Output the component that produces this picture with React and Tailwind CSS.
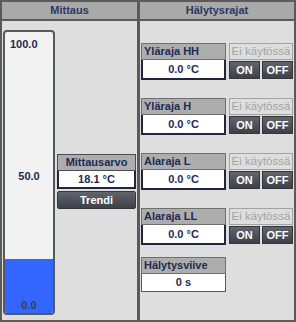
import { Fragment } from 'react'

const font = { fontFamily: '"Liberation Sans", Arial, sans-serif' }

const limits = [
  { label: 'Yläraja HH', value: '0.0 °C' },
  { label: 'Yläraja H', value: '0.0 °C' },
  { label: 'Alaraja L', value: '0.0 °C' },
  { label: 'Alaraja LL', value: '0.0 °C' },
]

const DarkButton = ({ children, className = '' }) => (
  <div
    className={`flex items-center justify-center border border-[#34363b] bg-gradient-to-b from-[#62656d] to-[#3d4047] text-[11px] font-bold text-white ${className}`}
  >
    {children}
  </div>
)

const LimitRow = ({ label, value }) => (
  <div className="flex gap-[3px]">
    <div className="flex w-[85px] flex-col">
      <div className="flex h-[17px] items-center border border-[#6f6f6f] bg-[#adadad] pl-[2px] text-[11px] font-bold text-[#1d2b55]">
        {label}
      </div>
      <div className="flex h-[20px] items-center justify-center border-x-2 border-b-2 border-[#22263a] bg-white text-[11px] font-bold text-[#1d2b55]">
        {value}
      </div>
    </div>
    <div className="flex w-[64px] flex-col gap-[1px]">
      <div className="flex h-[17px] items-center justify-center border border-[#a3a3a3] bg-[#dedede] text-[11.5px] text-[#a3a3a3]">
        Ei käytössä
      </div>
      <div className="flex gap-[2px]">
        <DarkButton className="h-[18px] w-[31px]">ON</DarkButton>
        <DarkButton className="h-[18px] w-[31px]">OFF</DarkButton>
      </div>
    </div>
  </div>
)

export default function App() {
  return (
    <div style={font} className="flex h-[322px] w-[296px] flex-col border-2 border-[#5a5a5a] bg-[#dedede]">
      {/* header */}
      <div className="flex h-[19px] border-b-2 border-[#5a5a5a] bg-[#a9a9a9] text-[11px] font-bold text-[#2a3866]">
        <div className="flex w-[135px] items-center justify-center">Mittaus</div>
        <div className="w-[3px] bg-[#5a5a5a]" />
        <div className="flex flex-1 items-center justify-center">Hälytysrajat</div>
      </div>

      <div className="flex flex-1">
        {/* Mittaus */}
        <div className="flex w-[135px] items-start gap-[2px] pl-[1px] pt-[9px]">
          <div className="relative flex h-[285px] w-[52px] flex-col overflow-hidden rounded-[4px] border-2 border-[#555a62] bg-[#f2f2f2]">
            <div className="flex-1" />
            <div className="h-[54px] bg-[#3366ff]" />
            <span className="absolute left-[5px] top-[4px] text-[11px] font-bold text-[#1d2b55]">100.0</span>
            <span className="absolute left-0 right-0 top-[136px] text-center text-[11px] font-bold text-[#1d2b55]">50.0</span>
            <span className="absolute bottom-[0px] left-0 right-0 text-center text-[11px] font-bold text-[#3a3f4a]">0.0</span>
          </div>
          <div className="mt-[124px] flex w-[79px] flex-col">
            <div className="flex h-[17px] items-center justify-center border border-[#4a4d55] bg-[#adadad] text-[11px] font-bold text-[#1d2b55]">
              Mittausarvo
            </div>
            <div className="flex h-[18px] items-center justify-center border-x-2 border-b-2 border-[#22263a] bg-white text-[11px] font-bold text-[#1d2b55]">
              18.1 °C
            </div>
            <DarkButton className="mt-[2px] h-[18px] rounded-[2px] text-[#e8e8f2]">Trendi</DarkButton>
          </div>
        </div>

        <div className="w-[3px] bg-[#5a5a5a]" />

        {/* Hälytysrajat */}
        <div className="flex flex-1 flex-col gap-[18px] pl-[1px] pt-[22px]">
          {limits.map((l) => (
            <Fragment key={l.label}>
              <LimitRow label={l.label} value={l.value} />
            </Fragment>
          ))}
          <div className="-mt-[6px] flex w-[85px] flex-col">
            <div className="flex h-[17px] items-center border border-[#6f6f6f] bg-[#adadad] pl-[2px] text-[11px] font-bold text-[#1d2b55]">
              Hälytysviive
            </div>
            <div className="flex h-[18px] items-center justify-center border-x border-b border-[#55585f] bg-white text-[11px] font-bold text-[#1d2b55]">
              0 s
            </div>
          </div>
        </div>
      </div>
    </div>
  )
}
